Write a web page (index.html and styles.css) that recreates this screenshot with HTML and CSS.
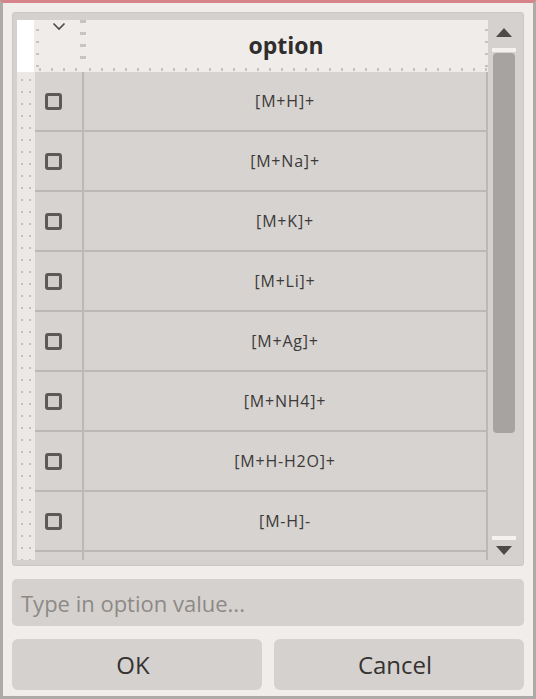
FILE: index.html
```html
<!DOCTYPE html>
<html>
<head>
<meta charset="utf-8">
<link rel="stylesheet" href="styles.css">
</head>
<body>
<div class="window">
  <div class="frame">
    <div class="table">
      <div class="grid">
        <div class="head">
          <div class="corner"></div>
          <div class="hcheck"><svg width="14" height="9" viewBox="0 0 14 9"><path d="M1.5 1.5 L7 7 L12.5 1.5" fill="none" stroke="#4b4947" stroke-width="1.6"/></svg></div>
          <div class="hopt">option</div>
        </div>
        <div class="body">
          <div class="rowheads"></div>
          <div class="rows">
            <div class="row"><div class="cchk"><span class="box"></span></div><div class="cval">[M+H]+</div></div>
            <div class="row"><div class="cchk"><span class="box"></span></div><div class="cval">[M+Na]+</div></div>
            <div class="row"><div class="cchk"><span class="box"></span></div><div class="cval">[M+K]+</div></div>
            <div class="row"><div class="cchk"><span class="box"></span></div><div class="cval">[M+Li]+</div></div>
            <div class="row"><div class="cchk"><span class="box"></span></div><div class="cval">[M+Ag]+</div></div>
            <div class="row"><div class="cchk"><span class="box"></span></div><div class="cval">[M+NH4]+</div></div>
            <div class="row"><div class="cchk"><span class="box"></span></div><div class="cval">[M+H-H2O]+</div></div>
            <div class="row"><div class="cchk"><span class="box"></span></div><div class="cval">[M-H]-</div></div>
            <div class="row"><div class="cchk"></div><div class="cval"></div></div>
          </div>
        </div>
      </div>
      <div class="scrollbar">
        <div class="arrow up"></div>
        <div class="track">
          <div class="cap"></div>
          <div class="thumb"></div>
          <div class="spacer"></div>
          <div class="cap"></div>
        </div>
        <div class="arrow down"></div>
      </div>
    </div>
  </div>
  <div class="input"><span class="ph">Type in option value...</span></div>
  <div class="buttons">
    <div class="btn">OK</div>
    <div class="btn">Cancel</div>
  </div>
</div>
</body>
</html>
```

FILE: styles.css
```css
html, body {
  margin: 0;
  padding: 0;
  background: #f0edea;
}
.window {
  box-sizing: border-box;
  width: 536px;
  height: 699px;
  border-top: 3px solid #d6848a;
  border-left: 3px solid #aeaaa7;
  border-right: 3px solid #aeaaa7;
  border-bottom: 3px solid #aeaaa7;
  padding: 9px 9px 0 9px;
  display: flex;
  flex-direction: column;
  font-family: "Open Sans", "Noto Sans", sans-serif;
}
.frame {
  box-sizing: border-box;
  height: 554px;
  background: #d5d1ce;
  border: 1px solid #cbc7c4;
  border-radius: 3px;
  padding: 7px 5px 5px 4px;
  display: flex;
}
.table {
  flex: 1;
  display: flex;
  overflow: hidden;
}
.grid {
  width: 471px;
  display: flex;
  flex-direction: column;
  overflow: hidden;
}
.head {
  height: 52px;
  display: flex;
  background: #efecea;
  flex-shrink: 0;
}
.corner {
  width: 17px;
  background: #ffffff;
}
.hcheck {
  box-sizing: border-box;
  width: 50px;
  background-color: #efecea;
  background-image:
    radial-gradient(circle, #c4c0bd 1.1px, transparent 1.4px);
  background-size: 12px 3px;
  background-repeat: repeat-x;
  background-position: 0 48px;
  display: flex;
  justify-content: center;
  padding-top: 2px;
  position: relative;
}
.hcheck::before {
  content: "";
  position: absolute;
  left: 2px;
  top: 0;
  bottom: 4px;
  width: 3px;
  background-image: radial-gradient(circle, #c4c0bd 1.1px, transparent 1.4px);
  background-size: 3px 12px;
  background-position: 0 4px;
}
.hcheck::after {
  content: "";
  position: absolute;
  right: -4px;
  top: 0;
  bottom: 4px;
  width: 8px;
  background-image: linear-gradient(90deg, #c8c4c1 0 6px, transparent 6px);
  background-size: 8px 12px;
  background-repeat: repeat-y;
  -webkit-mask: repeating-linear-gradient(180deg, #000 0 3px, transparent 3px 12px);
  mask: repeating-linear-gradient(180deg, #000 0 3px, transparent 3px 12px);
  background-position: 0 3px;
}
.hopt {
  flex: 1;
  display: flex;
  align-items: center;
  justify-content: center;
  font-weight: bold;
  font-size: 23px;
  color: #2f2e2d;
  padding-bottom: 2px;
  background-image:
    radial-gradient(circle, #c4c0bd 1.1px, transparent 1.4px),
    radial-gradient(circle, #c4c0bd 1.1px, transparent 1.4px);
  background-size: 12px 3px, 3px 12px;
  background-repeat: repeat-x, repeat-y;
  background-position: 0 48px, 100% 4px;
}
.body {
  flex: 1;
  display: flex;
  overflow: hidden;
}
.rowheads {
  width: 18px;
  flex-shrink: 0;
  background-color: #ebe8e5;
  background-image: radial-gradient(circle, #c4c0bd 1.2px, transparent 1.5px);
  background-size: 8px 12px;
  background-position: 1px 2px;
}
.rows {
  flex: 1;
  display: flex;
  flex-direction: column;
}
.row {
  box-sizing: border-box;
  height: 60px;
  flex-shrink: 0;
  display: flex;
  border-bottom: 2px solid #bcb8b5;
  background: #d7d3d0;
}
.cchk {
  box-sizing: border-box;
  width: 49px;
  border-right: 2px solid #bcb8b5;
  display: flex;
  align-items: center;
  padding-left: 10px;
}
.box {
  box-sizing: border-box;
  width: 17px;
  height: 17px;
  border: 3px solid #5c5a58;
  border-radius: 3px;
  background: #d0ccc9;
}
.cval {
  box-sizing: border-box;
  flex: 1;
  display: flex;
  align-items: center;
  justify-content: center;
  font-size: 16px;
  letter-spacing: 0.8px;
  color: #3c3a39;
  border-right: 2px solid #bcb8b5;
}
.scrollbar {
  width: 28px;
  margin-left: 2px;
  display: flex;
  flex-direction: column;
  align-items: center;
}
.arrow {
  width: 0;
  height: 0;
  border-left: 8px solid transparent;
  border-right: 8px solid transparent;
}
.arrow.up {
  border-bottom: 9px solid #4d4b49;
  margin-top: 8px;
  margin-bottom: 11px;
}
.arrow.down {
  border-top: 9px solid #4d4b49;
  margin-top: 6px;
  margin-bottom: 5px;
}
.track {
  flex: 1;
  width: 100%;
  display: flex;
  flex-direction: column;
  align-items: center;
}
.cap {
  width: 24px;
  height: 4px;
  background: #f4f2f0;
}
.thumb {
  width: 22px;
  height: 380px;
  margin-top: 1px;
  background: #a7a3a0;
  border-radius: 4px;
}
.spacer {
  flex: 1;
}
.input {
  box-sizing: border-box;
  margin-top: 13px;
  height: 47px;
  background: #d5d1ce;
  border-radius: 5px;
  display: flex;
  align-items: center;
  padding-left: 9px;
}
.ph {
  color: #8d8986;
  font-size: 22px;
  line-height: 30px;
}
.buttons {
  margin-top: 13px;
  display: flex;
  gap: 12px;
}
.btn {
  flex: 1;
  box-sizing: border-box;
  height: 51px;
  background: #d5d1ce;
  border-radius: 6px;
  display: flex;
  align-items: center;
  justify-content: center;
  font-size: 24px;
  line-height: 32px;
  color: #353332;
  padding-right: 8px;
}
```
